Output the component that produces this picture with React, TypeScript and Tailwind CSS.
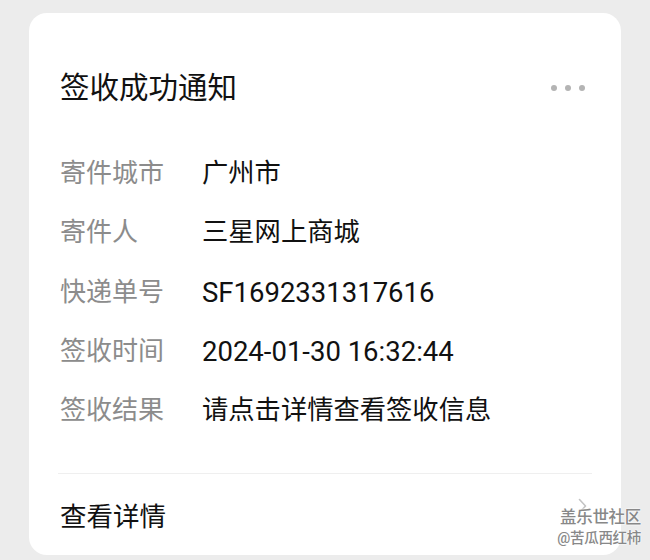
const rows = [
  { label: '寄件城市', value: '广州市', latin: false },
  { label: '寄件人', value: '三星网上商城', latin: false },
  { label: '快递单号', value: 'SF1692331317616', latin: true },
  { label: '签收时间', value: '2024-01-30 16:32:44', latin: true },
  { label: '签收结果', value: '请点击详情查看签收信息', latin: false },
];

const font = "font-['Roboto','Noto_Sans_CJK_SC',sans-serif]";

export default function App() {
  return (
    <div className={`relative w-[650px] h-[560px] bg-[#ececec] pt-[13px] pl-[29px] overflow-hidden ${font}`}>
      <div className="w-[592px] h-[542px] rounded-[18px] bg-white flex flex-col">
        {/* header */}
        <div className="flex items-center justify-between pl-[31px] pr-[36px] pt-[57px]">
          <h2 className="text-[29.5px] leading-[36px] text-[#111]">签收成功通知</h2>
          <div className="flex gap-[8px]">
            <span className="w-[6px] h-[6px] rounded-full bg-[#b4b4b4]" />
            <span className="w-[6px] h-[6px] rounded-full bg-[#b4b4b4]" />
            <span className="w-[6px] h-[6px] rounded-full bg-[#b4b4b4]" />
          </div>
        </div>

        <div className="mt-[38px] pl-[31px] flex flex-col">
          {rows.map(r => (
            <div key={r.label} className="flex h-[59.3px] items-center">
              <span className="w-[142px] text-[26px] text-[#8c8c8c]">{r.label}</span>
              <span className={`${r.latin ? 'text-[27.5px]' : 'text-[26.3px]'} text-[#111]`}>{r.value}</span>
            </div>
          ))}
        </div>

        <div className="mt-[33px] mx-[29px] h-px bg-[#efefef]" />

        <div className="mt-[25px] flex items-center justify-between pl-[31px] pr-[34px]">
          <span className="text-[26.5px] leading-[36px] text-[#111]">查看详情</span>
          <svg width="9" height="16" viewBox="0 0 9 16" className="shrink-0 -mt-[22px]">
            <path d="M1.5 1.5 L7.5 8 L1.5 14.5" fill="none" stroke="#c4c4c4" strokeWidth="1.6" strokeLinecap="round" strokeLinejoin="round" />
          </svg>
        </div>
      </div>

      {/* watermark */}
      <div className="absolute right-[9px] top-[509px] flex flex-col items-end text-[#888] font-medium [text-shadow:0_0_2px_#fff,0_0_2px_#fff]">
        <span className="text-[16.5px] leading-[18px] tracking-[-0.3px]">盖乐世社区</span>
        <span className="text-[14.5px] leading-[18px] tracking-[-0.3px] mt-[3px]">@苦瓜西红柿</span>
      </div>
    </div>
  );
}
